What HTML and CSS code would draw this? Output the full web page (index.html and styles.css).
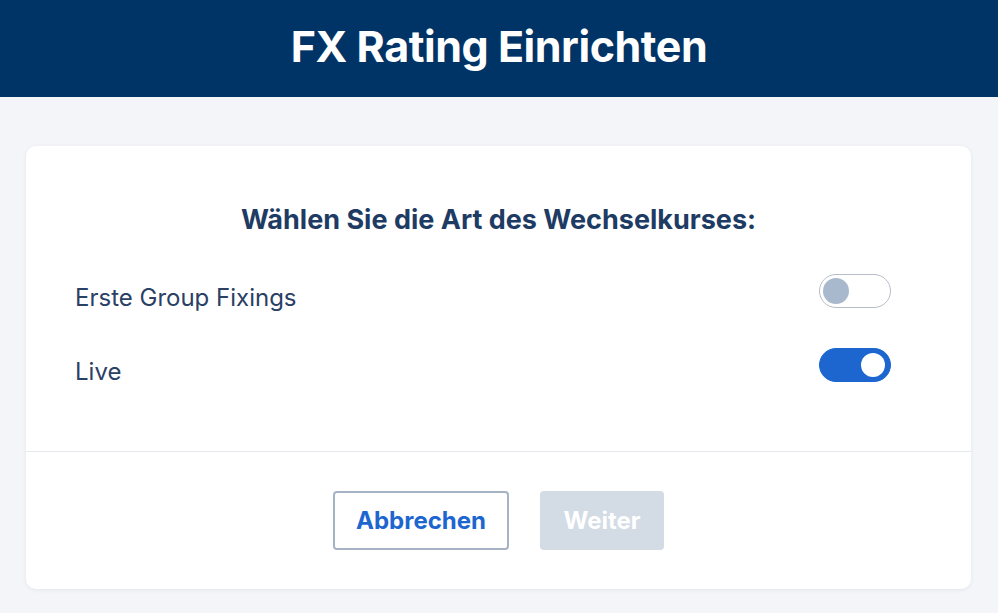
FILE: index.html
```html
<!DOCTYPE html>
<html lang="de">
<head>
<meta charset="utf-8">
<title>FX Rating Einrichten</title>
<link rel="stylesheet" href="styles.css">
</head>
<body>
<header class="topbar">
  <h1 class="title">FX Rating Einrichten</h1>
</header>
<main class="main">
  <section class="card">
    <div class="card-body">
      <h2 class="question">Wählen Sie die Art des Wechselkurses:</h2>
      <div class="options">
        <label class="option">
          <span class="option-label">Erste Group Fixings</span>
          <span class="toggle"><span class="knob"></span></span>
        </label>
        <label class="option">
          <span class="option-label">Live</span>
          <span class="toggle on"><span class="knob"></span></span>
        </label>
      </div>
    </div>
    <div class="card-footer">
      <button class="btn btn-outline">Abbrechen</button>
      <button class="btn btn-disabled">Weiter</button>
    </div>
  </section>
</main>
</body>
</html>
```
FILE: styles.css
```css
* { box-sizing: border-box; }
html, body { margin: 0; padding: 0; }
body {
  background: #f3f5f8;
  font-family: Inter, "Noto Sans", "Liberation Sans", sans-serif;
  width: 998px;
  height: 613px;
  overflow: hidden;
}
.topbar {
  height: 97px;
  background: #013466;
  display: flex;
  align-items: center;
  justify-content: center;
}
.title {
  margin: 0;
  color: #ffffff;
  font-size: 43px;
  font-weight: 700;
  letter-spacing: -0.45px;
  line-height: 44px;
  padding-bottom: 5px;
}
.main {
  padding: 49px 27px 0 26px;
}
.card {
  background: #ffffff;
  border-radius: 10px;
  box-shadow: 0 1px 4px rgba(20, 40, 80, 0.07);
  height: 443px;
  display: flex;
  flex-direction: column;
}
.card-body {
  padding: 60px 80px 69px 49px;
  border-bottom: 1px solid #e5e8ec;
}
.question {
  margin: 0 0 41px 31px;
  text-align: center;
  color: #1e3b64;
  font-size: 27px;
  font-weight: 700;
  line-height: 27px;
}
.options {
  display: flex;
  flex-direction: column;
  gap: 40px;
}
.option {
  display: flex;
  align-items: center;
  justify-content: space-between;
  height: 34px;
}
.option-label {
  color: #2a4064;
  font-size: 24px;
  line-height: 24px;
  position: relative;
  top: 7px;
}
.toggle {
  width: 72px;
  height: 34px;
  border-radius: 17px;
  border: 1px solid #b7bec8;
  background: #ffffff;
  display: flex;
  align-items: center;
  padding: 0 3px;
}
.toggle .knob {
  width: 26px;
  height: 26px;
  border-radius: 50%;
  background: #a8b8cd;
}
.toggle.on {
  background: #1d66cf;
  border-color: #1d66cf;
  justify-content: flex-end;
  padding: 0 5px;
}
.toggle.on .knob {
  width: 24px;
  height: 24px;
  background: #ffffff;
}
.card-footer {
  display: flex;
  justify-content: center;
  gap: 31px;
  padding-top: 39px;
}
.btn {
  font-family: Inter, "Noto Sans", "Liberation Sans", sans-serif;
  font-size: 24px;
  font-weight: 700;
  height: 59px;
  border-radius: 4px;
  padding: 0;
}
.btn-outline {
  width: 176px;
  background: #ffffff;
  border: 2px solid #a6b3c4;
  color: #1d66cf;
}
.btn-disabled {
  width: 124px;
  background: #d3dbe5;
  border: none;
  color: #ffffff;
}
```
